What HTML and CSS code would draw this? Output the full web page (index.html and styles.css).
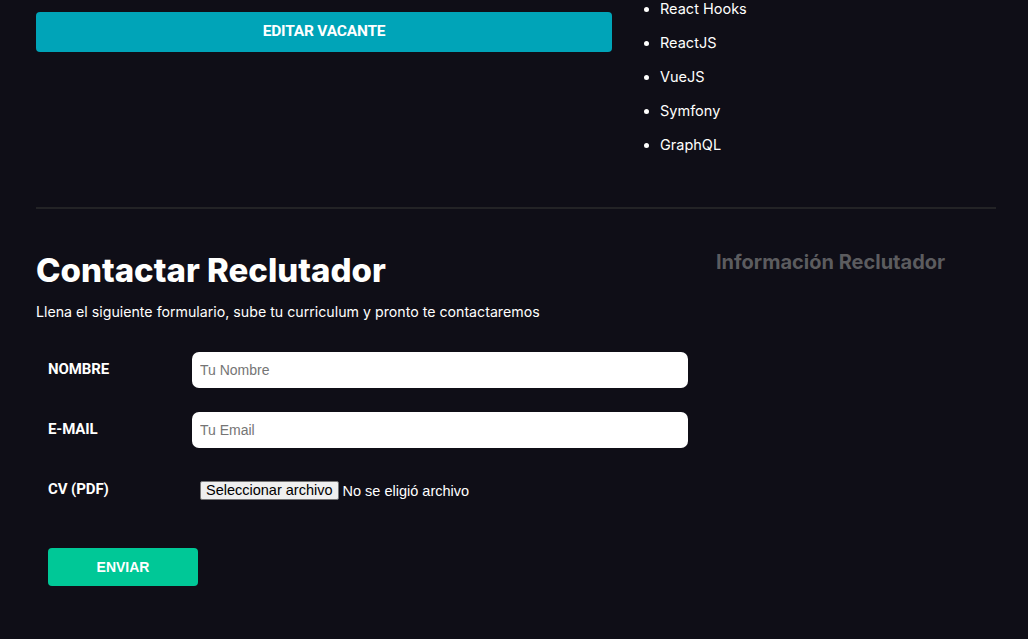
FILE: index.html
```html
<!DOCTYPE html>
<html lang="es">
<head>
<meta charset="utf-8">
<title>Vacante</title>
<link rel="stylesheet" href="styles.css">
</head>
<body>
<main class="container">
  <section class="top">
    <div class="top-left">
      <a class="btn-edit" href="#">EDITAR VACANTE</a>
    </div>
    <div class="top-right">
      <ul class="skills">
        <li>React Hooks</li>
        <li>ReactJS</li>
        <li>VueJS</li>
        <li>Symfony</li>
        <li>GraphQL</li>
      </ul>
    </div>
  </section>
  <hr class="divider">
  <section class="contact">
    <div class="contact-main">
      <h2 class="title">Contactar Reclutador</h2>
      <p class="subtitle">Llena el siguiente formulario, sube tu curriculum y pronto te contactaremos</p>
      <form class="form">
        <div class="row">
          <label class="label" for="nombre">NOMBRE</label>
          <input class="input" id="nombre" type="text" placeholder="Tu Nombre">
        </div>
        <div class="row">
          <label class="label" for="email">E-MAIL</label>
          <input class="input" id="email" type="email" placeholder="Tu Email">
        </div>
        <div class="row row-file">
          <span class="label">CV (PDF)</span>
          <div class="file">
            <input class="file-native" id="cv" type="file" accept="application/pdf">
            <label class="file-btn" for="cv">Seleccionar archivo</label>
            <span class="file-name">No se eligió archivo</span>
          </div>
        </div>
        <button class="btn-send" type="button">ENVIAR</button>
      </form>
    </div>
    <aside class="contact-side">
      <h3 class="side-title">Información Reclutador</h3>
    </aside>
  </section>
</main>
</body>
</html>
```
FILE: styles.css
```css
html, body {
  margin: 0;
  padding: 0;
  background: #0f0e17;
  color: #fffffe;
  font-family: "Inter", "Roboto", sans-serif;
}
.container {
  width: 960px;
  margin: 0 auto;
  padding: 0 32px 0 36px;
}
.top {
  display: flex;
  gap: 24px;
}
.top-left {
  width: 576px;
  padding-top: 12px;
}
.btn-edit {
  display: flex;
  align-items: center;
  justify-content: center;
  height: 40px;
  padding-bottom: 2px;
  box-sizing: border-box;
  background: #00a4b8;
  border-radius: 4px;
  color: #fff;
  text-decoration: none;
  font-family: "Roboto", sans-serif;
  font-weight: 700;
  font-size: 15.5px;
  letter-spacing: -0.2px;
}
.top-right {
  flex: 1;
}
.skills {
  margin: 0;
  padding: 0 0 0 24px;
  list-style: disc;
}
.skills li {
  font-size: 14.5px;
  line-height: 18px;
  margin-bottom: 16px;
  font-weight: 400;
}
.divider {
  border: 0;
  height: 2px;
  background: #232326;
  margin: 37px 0 0 0;
}
.contact {
  display: flex;
  gap: 20px;
}
.contact-main {
  width: 660px;
}
.title {
  margin: 41px 0 0 0;
  font-size: 33px;
  font-weight: 800;
  line-height: 40px;
  letter-spacing: 0;
}
.subtitle {
  margin: 12px 0 0 0;
  font-size: 14.2px;
  line-height: 20px;
}
.form {
  padding: 30px 0 0 12px;
}
.row {
  display: flex;
  align-items: flex-start;
  min-height: 36px;
  margin-bottom: 24px;
}
.label {
  width: 144px;
  flex-shrink: 0;
  padding-top: 8px;
  font-family: "Roboto", sans-serif;
  font-weight: 700;
  font-size: 15px;
  letter-spacing: -0.1px;
}
.input {
  width: 496px;
  height: 36px;
  box-sizing: border-box;
  border: 0;
  border-radius: 7px;
  background: #fff;
  padding: 0 8px;
  font-family: "Liberation Sans", Arial, sans-serif;
  font-size: 14px;
  color: #333;
}
.input::placeholder {
  color: #757575;
}
.row-file {
  margin-bottom: 40px;
}
.file {
  display: flex;
  align-items: center;
  margin: 9px 0 0 8px;
  font-family: "Liberation Sans", Arial, sans-serif;
  font-size: 14.5px;
  color: #fff;
}
.file-native {
  display: none;
}
.file-btn {
  display: inline-block;
  height: 19px;
  line-height: 17px;
  box-sizing: border-box;
  padding: 0 5px;
  background: #efefef;
  border: 1px solid #767676;
  border-radius: 2px;
  color: #000;
  cursor: pointer;
}
.file-name {
  margin-left: 4px;
}
.btn-send {
  width: 150px;
  height: 38px;
  border: 0;
  border-radius: 4px;
  background: #00c897;
  color: #fff;
  font-family: "Liberation Sans", Arial, sans-serif;
  font-weight: 700;
  font-size: 14px;
}
.contact-side {
  flex: 1;
}
.side-title {
  margin: 41px 0 0 0;
  font-size: 20px;
  font-weight: 700;
  color: #5c5c5f;
}
```
